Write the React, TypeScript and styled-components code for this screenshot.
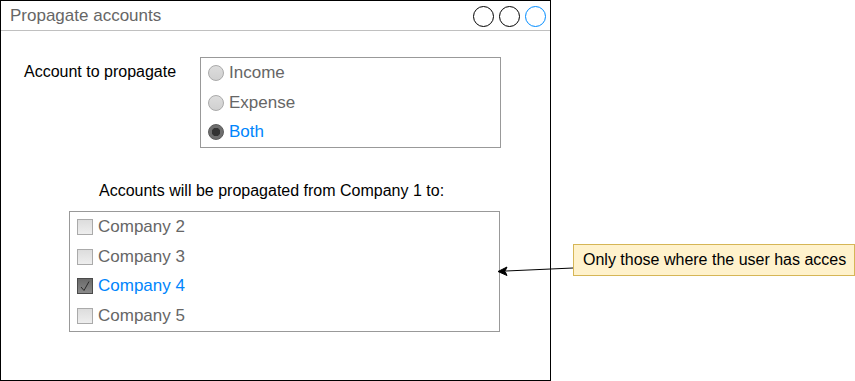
import React from 'react';
import styled, {createGlobalStyle} from 'styled-components';

const GlobalStyle = createGlobalStyle`
  body {
    margin: 0;
    background: #FFFFFF;
    font-family: "Liberation Sans", Arial, sans-serif;
  }
`;

const accountTypes = [
  {label: 'Income', selected: false},
  {label: 'Expense', selected: false},
  {label: 'Both', selected: true},
];

const companies = [
  {label: 'Company 2', checked: false},
  {label: 'Company 3', checked: false},
  {label: 'Company 4', checked: true},
  {label: 'Company 5', checked: false},
];

const App = () => {
  return (
    <Canvas>
      <GlobalStyle />
      <Window>
        <TitleBar>
          <Title>Propagate accounts</Title>
          <WindowButtons>
            <WindowButton />
            <WindowButton />
            <WindowButton accent />
          </WindowButtons>
        </TitleBar>
        <Body>
          <FormRow>
            <FieldLabel>Account to propagate</FieldLabel>
            <RadioGroup>
              {accountTypes.map(item => (
                <OptionRow key={item.label}>
                  <Radio selected={item.selected} />
                  <OptionText active={item.selected}>{item.label}</OptionText>
                </OptionRow>
              ))}
            </RadioGroup>
          </FormRow>
          <SectionHeading>Accounts will be propagated from Company 1 to:</SectionHeading>
          <CheckList>
            {companies.map(item => (
              <OptionRow key={item.label}>
                <Checkbox checked={item.checked}>
                  {item.checked && (
                    <svg width="14" height="14" viewBox="0 0 14 14">
                      <polyline points="3,8 6,11.5 11,2.5" fill="none" stroke="#2a2a2a" strokeWidth="1" />
                    </svg>
                  )}
                </Checkbox>
                <OptionText active={item.checked}>{item.label}</OptionText>
              </OptionRow>
            ))}
          </CheckList>
        </Body>
      </Window>
      <NoteColumn>
        <Note>Only those where the user has acces</Note>
      </NoteColumn>
      <Connector width="855" height="381" viewBox="0 0 855 381">
        <line x1="573" y1="268" x2="506" y2="271" stroke="#000000" strokeWidth="1" />
        <polygon points="498,271.5 507,267 505,271.2 507,275.5" fill="#000000" stroke="#000000" strokeWidth="1" />
      </Connector>
    </Canvas>
  );
};

export default App;

const Canvas = styled.div`
  position: relative;
  display: flex;
  align-items: flex-start;
  width: 855px;
  height: 381px;
`;

const Window = styled.div`
  box-sizing: border-box;
  width: 551px;
  height: 381px;
  border: 1px solid #000000;
  display: flex;
  flex-direction: column;
  flex-shrink: 0;
`;

const TitleBar = styled.div`
  display: flex;
  align-items: center;
  justify-content: space-between;
  height: 29px;
  padding: 0 4px 0 9px;
  border-bottom: 1px solid #C0C0C0;
`;

const Title = styled.span`
  font-size: 17px;
  color: #666666;
  padding-top: 1px;
`;

const WindowButtons = styled.div`
  display: flex;
  gap: 5px;
  padding-top: 1px;
`;

const WindowButton = styled.div<{accent?: boolean}>`
  box-sizing: border-box;
  width: 21px;
  height: 21px;
  border-radius: 50%;
  border: 1.3px solid ${p => (p.accent ? '#008CFF' : '#000000')};
`;

const Body = styled.div`
  display: flex;
  flex-direction: column;
  padding-top: 26px;
`;

const FormRow = styled.div`
  display: flex;
  align-items: flex-start;
`;

const FieldLabel = styled.div`
  width: 176px;
  padding-left: 23px;
  padding-top: 1px;
  line-height: 28px;
  font-size: 16px;
  color: #000000;
`;

const Box = styled.div`
  box-sizing: border-box;
  border: 1px solid #999999;
  background: #FFFFFF;
  display: flex;
  flex-direction: column;
  padding-left: 7px;
`;

const RadioGroup = styled(Box)`
  width: 301px;
  height: 91px;
`;

const CheckList = styled(Box)`
  width: 431px;
  height: 121px;
  margin-left: 68px;
`;

const SectionHeading = styled.div`
  margin: 33px 0 10px 98px;
  line-height: 20px;
  font-size: 16px;
  color: #000000;
`;

const OptionRow = styled.div`
  display: flex;
  align-items: center;
  gap: 5px;
  height: 29.7px;
`;

const OptionText = styled.span<{active?: boolean}>`
  font-size: 17px;
  color: ${p => (p.active ? '#0085FC' : '#666666')};
`;

const Radio = styled.span<{selected?: boolean}>`
  box-sizing: border-box;
  width: 16px;
  height: 16px;
  border-radius: 50%;
  flex-shrink: 0;
  border: 1px solid ${p => (p.selected ? '#5A5A5A' : '#AAAAAA')};
  background: ${p =>
    p.selected
      ? 'radial-gradient(circle, #333333 0 4px, #6E6E6E 4.5px)'
      : 'linear-gradient(#DDDDDD, #D0D0D0)'};
`;

const Checkbox = styled.span<{checked?: boolean}>`
  box-sizing: border-box;
  width: 16px;
  height: 16px;
  flex-shrink: 0;
  display: flex;
  align-items: center;
  justify-content: center;
  border: 1px solid ${p => (p.checked ? '#4A4A4A' : '#AAAAAA')};
  background: ${p => (p.checked ? 'linear-gradient(#6A6A6A, #8A8A8A)' : 'linear-gradient(#DDDDDD, #EEEEEE)')};
`;

const NoteColumn = styled.div`
  padding: 244px 0 0 22px;
`;

const Note = styled.div`
  box-sizing: border-box;
  width: 282px;
  height: 32px;
  display: flex;
  align-items: center;
  padding-left: 9px;
  background: #FFF2CC;
  border: 1px solid #D6B656;
  font-size: 16px;
  color: #000000;
  white-space: nowrap;
`;

const Connector = styled.svg`
  position: absolute;
  left: 0;
  top: 0;
  pointer-events: none;
`;
